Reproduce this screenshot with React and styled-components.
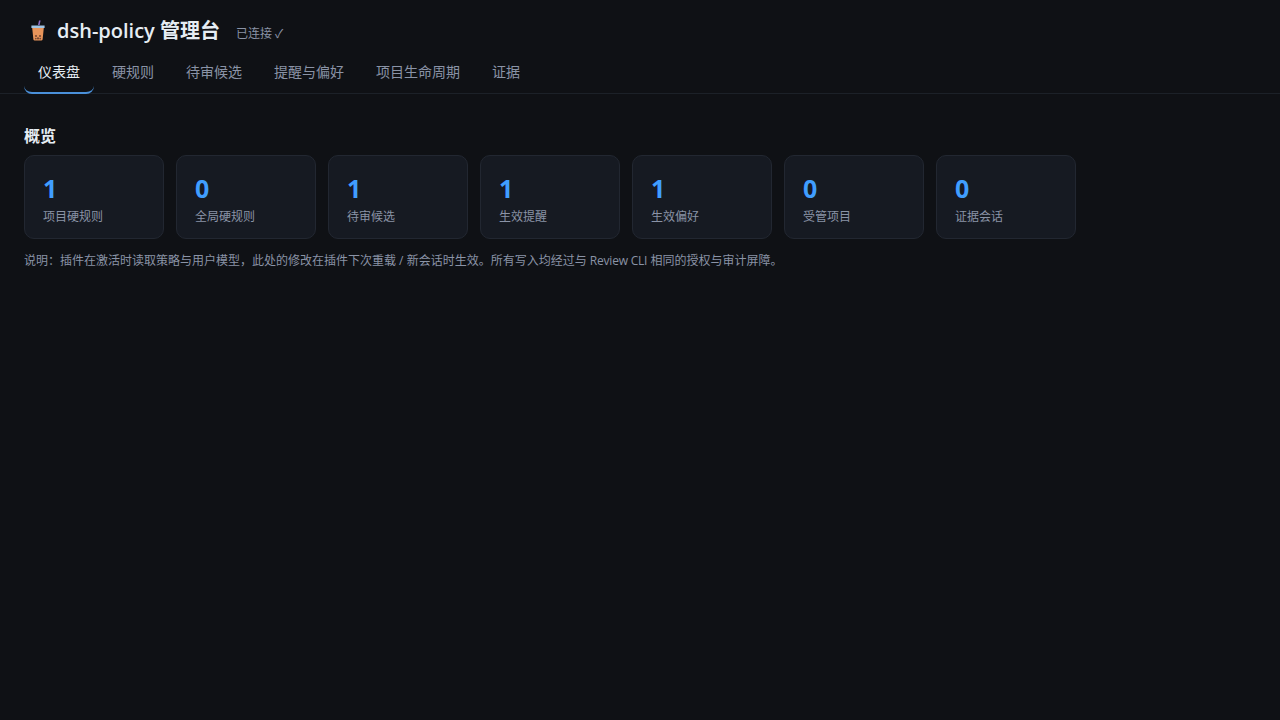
import styled, { createGlobalStyle } from "styled-components";

const stats = [
  { value: 1, label: "项目硬规则" },
  { value: 0, label: "全局硬规则" },
  { value: 1, label: "待审候选" },
  { value: 1, label: "生效提醒" },
  { value: 1, label: "生效偏好" },
  { value: 0, label: "受管项目" },
  { value: 0, label: "证据会话" },
];

const tabs = ["仪表盘", "硬规则", "待审候选", "提醒与偏好", "项目生命周期", "证据"];

function BubbleTea() {
  return (
    <svg width="20" height="22" viewBox="0 0 20 22">
      <path d="M11 0.5h1.6L11.6 5H10z" fill="#8e6cc4" />
      <path d="M3.4 5.5h13.2v2.5H3.4z" fill="#9fc4e4" />
      <path d="M4.2 8h11.6l-1.2 11.4a1.4 1.4 0 0 1-1.4 1.1H6.8a1.4 1.4 0 0 1-1.4-1.1z" fill="#e8945a" />
      <circle cx="8" cy="16" r="1.1" fill="#7a4a32" />
      <circle cx="12" cy="16" r="1.1" fill="#7a4a32" />
      <circle cx="10" cy="18.4" r="1.1" fill="#7a4a32" />
      <circle cx="7.8" cy="18.6" r="0.9" fill="#7a4a32" />
      <circle cx="12.2" cy="18.6" r="0.9" fill="#7a4a32" />
    </svg>
  );
}

export default function App() {
  return (
    <>
      <GlobalStyle />
      <Header>
        <TitleRow>
          <BubbleTea />
          <Title>dsh-policy 管理台</Title>
          <Status>已连接 ✓</Status>
        </TitleRow>
        <TabBar>
          {tabs.map((tab, i) => (
            <Tab key={tab} $active={i === 0}>
              {tab}
            </Tab>
          ))}
        </TabBar>
      </Header>
      <Main>
        <SectionTitle>概览</SectionTitle>
        <CardRow>
          {stats.map((s) => (
            <Card key={s.label}>
              <Value>{s.value}</Value>
              <Label>{s.label}</Label>
            </Card>
          ))}
        </CardRow>
        <Note>
          说明：插件在激活时读取策略与用户模型，此处的修改在插件下次重载 / 新会话时生效。所有写入均经过与 <Latin>Review CLI</Latin> 相同的授权与审计屏障。
        </Note>
      </Main>
    </>
  );
}

const GlobalStyle = createGlobalStyle`
  html, body {
    margin: 0;
    height: 100%;
    background: #0f1115;
    color: #e6edf3;
    font-family: "Open Sans", "Noto Sans CJK SC", sans-serif;
  }
`;

const Header = styled.header`
  padding: 16px 24px 0;
  border-bottom: 1px solid #1c2128;
`;

const TitleRow = styled.div`
  display: flex;
  align-items: center;
  height: 30px;
  padding-left: 4px;
`;

const Title = styled.h1`
  margin: 0 0 4px 9px;
  font-size: 20px;
  font-weight: 600;
  color: #e6edf3;
`;

const Status = styled.span`
  margin: 3px 0 0 16px;
  font-size: 12px;
  color: #8a93a6;
`;

const TabBar = styled.nav`
  display: flex;
  gap: 4px;
  margin-top: 7px;
`;

const Tab = styled.div`
  padding: 0 14px;
  height: 41px;
  line-height: 38px;
  box-sizing: border-box;
  font-size: 14px;
  color: ${(p) => (p.$active ? "#e6edf3" : "#8a93a6")};
  border-bottom: 2px solid ${(p) => (p.$active ? "#4a90d9" : "transparent")};
  border-radius: 0 0 8px 8px;
  margin-bottom: -1px;
`;

const Main = styled.main`
  padding: 32px 24px 0;
`;

const SectionTitle = styled.h2`
  margin: 0 0 8px;
  font-size: 16px;
  line-height: 21px;
  font-weight: 700;
  color: #e6edf3;
`;

const CardRow = styled.div`
  display: flex;
  gap: 12px;
`;

const Card = styled.div`
  width: 140px;
  height: 84px;
  box-sizing: border-box;
  padding: 17px 18px 0;
  background: #161a22;
  border: 1px solid #222731;
  border-radius: 10px;
`;

const Value = styled.div`
  font-size: 25px;
  line-height: 30px;
  font-weight: 700;
  color: #409eff;
`;

const Label = styled.div`
  margin-top: 5px;
  font-size: 12px;
  line-height: 17px;
  color: #8a93a6;
`;

const Note = styled.p`
  margin: 13px 0 0;
  font-size: 12px;
  line-height: 18px;
  color: #8a93a6;
`;

const Latin = styled.span`
  letter-spacing: -0.2px;
`;
